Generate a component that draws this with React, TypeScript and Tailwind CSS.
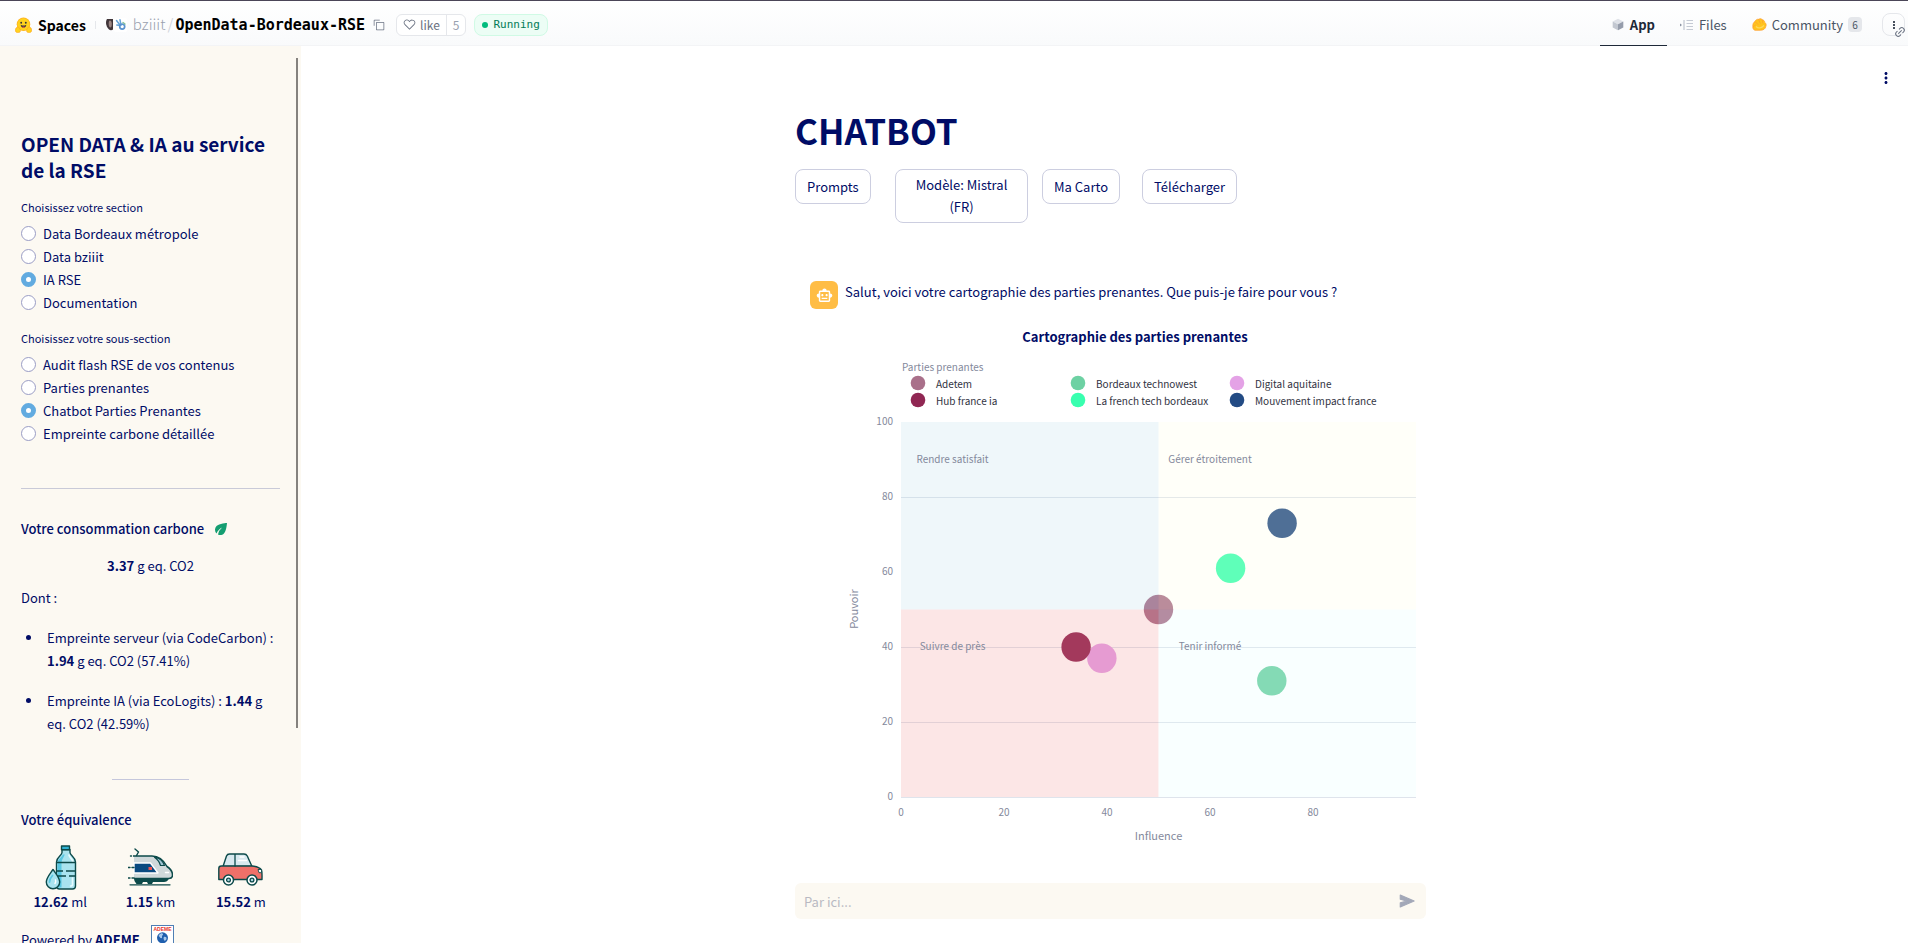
import { useState } from "react";
import { MdEco, MdMoreVert, MdOutlineSmartToy } from "react-icons/md";
import { Link2 } from "lucide-react";

/* ---------- Icons ---------- */

function HuggingFaceLogo() {
  return (
    <svg viewBox="0 0 34 32" className="h-4 w-[17px]" aria-hidden="true">
      <circle cx="17" cy="14.5" r="13.5" fill="#FFB01F" />
      <circle cx="17" cy="14.8" r="12.2" fill="#FFD21E" />
      <circle cx="12.4" cy="11.6" r="1.9" fill="#32343D" />
      <circle cx="21.6" cy="11.6" r="1.9" fill="#32343D" />
      <path d="M11.5 15.6c1.6 1.2 3.4 1.6 5.5 1.6s3.9-.4 5.5-1.6c.3 3-2 6-5.5 6s-5.8-3-5.5-6z" fill="#32343D" />
      <path d="M14 20.2c1.2-1.6 4.8-1.6 6 0-1.5 1.7-4.5 1.7-6 0z" fill="#FF5B52" />
      <path d="M1.5 24c-.4-2 1.3-3 2.6-2.2-.6-2.7 2-3.5 3.2-1.4l2.7 4c1 1.6 1.5 4.2-.6 6-2.6 1.5-7 1-8.2-1.6-.8-1.8-.6-3.5.3-4.8z" fill="#FFD21E" stroke="#FFA51F" strokeWidth="1.3" />
      <path d="M32.5 24c.4-2-1.3-3-2.6-2.2.6-2.7-2-3.5-3.2-1.4l-2.7 4c-1 1.6-1.5 4.2.6 6 2.6 1.5 7 1 8.2-1.6.8-1.8.6-3.5-.3-4.8z" fill="#FFD21E" stroke="#FFA51F" strokeWidth="1.3" />
    </svg>
  );
}

function OwnerAvatar() {
  return (
    <svg viewBox="0 0 22 14" className="h-[14px] w-[22px]" aria-hidden="true">
      <path d="M2 1h6v10.5c-1 1-3 1-4 0C2 9.500 1 7 1 5s.3-3 1-4z" fill="#41363a" />
      <path d="M4.800 2.500c1.200 0 2 1 2 3.500s-.7 3.500-1.500 3.500S3.700 8 3.700 6s.3-3.500 1.100-3.500z" fill="#9b8684" />
      <rect x="9" width="13" height="14" rx="2" fill="#fff" />
      <path d="M11.500 2.500l3.500 4.500M15 1.800l.8 4M11.800 7l4 .5" stroke="#65a3d8" strokeWidth="1.5" strokeLinecap="round" />
      <circle cx="17.2" cy="8.6" r="2.5" fill="none" stroke="#5b93cf" strokeWidth="1.7" />
      <path d="M18 4.500l2 1.500" stroke="#85c19a" strokeWidth="1.4" strokeLinecap="round" />
    </svg>
  );
}

function CopyIcon() {
  return (
    <svg viewBox="0 0 32 32" className="h-3 w-3" fill="currentColor" aria-hidden="true">
      <path d="M28,10V28H10V10H28m0-2H10a2,2,0,0,0-2,2V28a2,2,0,0,0,2,2H28a2,2,0,0,0,2-2V10a2,2,0,0,0-2-2Z" />
      <path d="M4,18H2V4A2,2,0,0,1,4,2H18V4H4Z" />
    </svg>
  );
}

function HeartIcon() {
  return (
    <svg viewBox="0 0 32 32" className="h-[13px] w-[13px]" fill="currentColor" aria-hidden="true">
      <path d="M22.45,6a5.47,5.47,0,0,1,3.91,1.64,5.7,5.7,0,0,1,0,8L16,26.13,5.64,15.64a5.7,5.7,0,0,1,0-8,5.48,5.48,0,0,1,7.82,0L16,10.24l2.53-2.58A5.44,5.44,0,0,1,22.45,6m0-2a7.47,7.47,0,0,0-5.34,2.24L16,7.36,14.89,6.24a7.49,7.49,0,0,0-10.68,0,7.72,7.72,0,0,0,0,10.82L16,29,27.79,17.06a7.72,7.72,0,0,0,0-10.82A7.49,7.49,0,0,0,22.45,4Z" />
    </svg>
  );
}

function CubeIcon() {
  return (
    <svg viewBox="0 0 12 13" className="h-[13px] w-3" aria-hidden="true">
      <path d="M6 .8l5.3 2.7L6 6.200.7 3.500z" fill="#dfe2e8" />
      <path d="M.7 3.500L6 6.200v6L.7 9.500z" fill="#c3c8d1" />
      <path d="M11.300 3.500L6 6.200v6l5.300-2.700z" fill="#969dab" />
    </svg>
  );
}

function FilesIcon() {
  return (
    <svg viewBox="0 0 13 12" className="h-3 w-[13px]" fill="none" stroke="#b4bac6" aria-hidden="true">
      <path d="M0 4.500l2 1.500-2 1.500z" fill="#8b93a3" stroke="none" />
      <path d="M4 1v10" />
      <path d="M6.500 1.500H13M6.500 4.500H13M6.500 7.500H13M6.500 10.500H13" stroke="#c5cad4" />
    </svg>
  );
}

function CommunityIcon() {
  return (
    <svg viewBox="0 0 15 13" className="h-[13px] w-[15px]" aria-hidden="true">
      <path d="M.8 8.500C.7 6 1.500 4.200 3 3.500 3.500 2 5 1 6.500 1.300 8 .2 9.800.6 10.300 1.800c1.500.2 2.300 1.200 2.500 2.600 1.300.8 1.800 2.600 1 4.100-.3 2.400-2.500 3.700-5.300 3.800H3C1.600 12 .7 10.600.8 8.500z" fill="#ffc41f" stroke="#ff9d2e" strokeWidth=".7" />
      <path d="M3.500 3.800L6 6.500M6.600 1.600l1.700 3.600M10.200 2l.6 3M1.500 8.500l2-1.500" stroke="#ff9d2e" strokeWidth=".7" strokeLinecap="round" fill="none" />
      <path d="M4 8.500c2 2 5.500 2 8-1" stroke="#ffd95c" strokeWidth="1.2" fill="none" />
    </svg>
  );
}

function SendIcon() {
  return (
    <svg viewBox="0 0 24 24" className="size-[18px]" fill="currentColor" stroke="currentColor" strokeWidth="1.5" strokeLinejoin="round" aria-hidden="true">
      <path d="M3 4l18.500 8L3 20v-5.500L11.500 12 3 9.500z" />
    </svg>
  );
}

function BottleIcon() {
  return (
    <svg viewBox="0 0 45 45" className="h-[45px] w-[45px]" strokeLinejoin="round" aria-hidden="true">
      <g stroke="#0c4a4a" strokeWidth="1.4">
        <path d="M24 4.500v3c0 3-5.500 4.500-5.500 9.500v24c0 2 1 3 3 3h13c2 0 3-1 3-3V17c0-5-5.500-6.500-5.500-9.500v-3z" fill="#a9e3ef" />
        <path d="M23.500 1h8v3.800h-8z" fill="#2fb1d2" />
      </g>
      <path d="M19.600 18c0-4 4-5 5.200-8.500h2c-1.500 4-3.300 5-3.300 9v24h-3.900z" fill="#58c7e2" />
      <path d="M31 10c.5 2.500 3.500 4 4 7M34.500 33v6.500c0 1-1 1.500-2 1.500" stroke="#e6fbff" strokeWidth="1.6" fill="none" strokeLinecap="round" />
      <path d="M19 17.500h18.500M19 26h6M28 26h9.500M19 31h9M31 31h6.500" stroke="#0c4a4a" strokeWidth="1.4" />
      <path d="M15 24.500c3.500 5 6.700 8.500 6.700 12.500a6.700 6.700 0 0 1-13.400 0c0-4 3.200-7.500 6.700-12.500z" fill="#a9e3ef" stroke="#0c4a4a" strokeWidth="1.4" />
      <path d="M11.500 37c0-2.500 1.700-5 3-6.500" stroke="#5cc9e3" strokeWidth="1.8" fill="none" strokeLinecap="round" />
      <path d="M17.500 35c.5 1.500.3 2.500-.5 3.500" stroke="#fff" strokeWidth="1.4" fill="none" strokeLinecap="round" />
    </svg>
  );
}

function TrainIcon() {
  return (
    <svg viewBox="0 0 45 45" className="h-[45px] w-[45px]" strokeLinejoin="round" aria-hidden="true">
      <path d="M6 11h18c8 0 12 5 15 10.500 3.500 2.300 5.500 5.500 5.500 8.500 0 2.500-1.500 3.500-4 3.500H6z" fill="#cfd8da" />
      <path d="M6 18h16.500L30 28H6z" fill="#0a4a80" stroke="#fff" strokeWidth="1.4" />
      <path d="M28 12.300c4 1.200 7 4.200 8.500 8.200h-4c-1-3.500-3-6-6-8.200z" fill="#9fc4d4" stroke="#0c4a4a" strokeWidth="1.2" />
      <path d="M5 11h19c8 0 12 5 15 10.500 3.500 2.300 5.500 5.500 5.500 8.500 0 2.500-1.500 3.500-4 3.500H6" fill="none" stroke="#0c4a4a" strokeWidth="1.5" />
      <path d="M8.500 10.500l2-3.500L7 4M2.500 11h1M0 22.500h2M4 22.500h2M0 33h2M4 33h2" fill="none" stroke="#0c4a4a" strokeWidth="1.4" strokeLinecap="round" />
      <path d="M37.500 27.500h3" stroke="#fff" strokeWidth="1.5" strokeLinecap="round" />
      <path d="M20.500 22h3.500v3h-3.500z" fill="#ef5350" />
      <path d="M6 33.500h35c-1 2.500-3 3.500-5 3.500H25l-1 2h-4l-1-2h-4l-1 2H8.500L6.500 36z" fill="#0c4a4a" />
      <path d="M2 39.800h40" stroke="#0c4a4a" strokeWidth="1.3" strokeLinecap="round" />
    </svg>
  );
}

function CarIcon() {
  return (
    <svg viewBox="0 0 45 45" className="h-[45px] w-[45px]" strokeLinejoin="round" aria-hidden="true">
      <path d="M5 21.500L8.500 11c.6-1.500 1.500-2 3-2H26c1.500 0 2.500.5 3.300 2L34 21.500z" fill="#d8e9ef" stroke="#0c4a4a" strokeWidth="1.4" />
      <path d="M20.500 15.500h8M22 12h4" stroke="#fff" strokeWidth="1.5" strokeLinecap="round" />
      <path d="M.8 23.500c0-1.500 1-2.500 2.500-2.500H34c5 .5 8 2 9.500 4 .8 2 .5 6.500.5 9.500H.8z" fill="#ef7069" stroke="#0c4a4a" strokeWidth="1.4" />
      <path d="M17 9v12.500" stroke="#0c4a4a" strokeWidth="1.3" />
      <path d="M40 24.500h3.500v3.200H41z" fill="#fff" stroke="#0c4a4a" strokeWidth=".9" />
      <circle cx="10.5" cy="35" r="5" fill="#fff" stroke="#0c4a4a" strokeWidth="1.5" />
      <circle cx="10.5" cy="35" r="1.9" fill="#a9d3dd" stroke="#0c4a4a" strokeWidth="1.3" />
      <circle cx="34" cy="35" r="5" fill="#fff" stroke="#0c4a4a" strokeWidth="1.5" />
      <circle cx="34" cy="35" r="1.9" fill="#a9d3dd" stroke="#0c4a4a" strokeWidth="1.3" />
    </svg>
  );
}

function AdemeLogo() {
  return (
    <svg viewBox="0 0 23 29" className="h-[29px] w-[23px]" role="img" aria-label="ADEME">
      <rect x=".5" y=".5" width="22" height="28" fill="#fff" stroke="#4f7fb5" />
      <text x="11.5" y="5.8" textAnchor="middle" fontSize="5" fontWeight="700" fill="#e5332a" className="font-['Liberation_Sans',sans-serif]">
        ADEME
      </text>
      <circle cx="11.5" cy="12.8" r="5.5" fill="#1f5fae" />
      <path d="M8 10c1.500-2 3.500-2 4-1s-1.500 1.500-1 3-1.500 1.500-2 .5S7 11 8 10zM13 12c1.500-.5 3 .5 2.500 2s-2 2.500-2.500 1-.7-2.500 0-3z" fill="#a8c8ea" />
      <path d="M4 21h15M4 24h15" stroke="#1f5fae" strokeWidth="1.2" />
    </svg>
  );
}

/* ---------- Header ---------- */

function Header() {
  return (
    <header className="flex h-[46px] shrink-0 items-stretch border-t border-b border-t-[#4b4658] border-b-gray-100 bg-gradient-to-b from-white to-gray-50 pr-[3px] pl-[15px]">
      <div className="flex items-center pt-[3px] text-black">
        <a href="#spaces" className="flex items-center gap-[6px] text-sm font-bold">
          <HuggingFaceLogo />
          Spaces
        </a>
        <span className="mx-[9px] h-2 w-px bg-gray-200" />
        <OwnerAvatar />
        <div className="ml-[6px] flex items-baseline text-[15px]">
          <a href="#owner" className="font-light text-gray-400">
            bziiit
          </a>
          <span className="mx-[2px] text-gray-300">/</span>
          <a href="#space" className="font-['DejaVu_Sans_Mono','Liberation_Mono',monospace] font-bold">
            OpenData-Bordeaux-RSE
          </a>
        </div>
        <button type="button" aria-label="Copier le nom" className="ml-2 text-gray-500">
          <CopyIcon />
        </button>
        <div className="ml-[11px] flex h-[22px] items-stretch rounded-md border border-gray-200 bg-white text-xs text-gray-500">
          <button type="button" className="flex items-center gap-1 px-[6px]">
            <HeartIcon />
            like
          </button>
          <button type="button" className="border-l border-gray-200 px-[6px] text-gray-400">
            5
          </button>
        </div>
        <div className="ml-2 flex h-[22px] items-center gap-[5px] rounded-lg border border-emerald-100 bg-emerald-50 px-[7px] text-[11px] text-emerald-700">
          <span className="size-[6px] rounded-full bg-emerald-500" />
          <span className="pt-px font-['DejaVu_Sans_Mono','Liberation_Mono',monospace]">Running</span>
        </div>
      </div>
      <nav className="ml-auto flex items-stretch text-[13px] text-gray-600">
        <a href="#app" className="-mb-px flex items-center gap-[6px] border-b border-gray-800 px-3 pt-[3px] font-bold text-gray-800">
          <CubeIcon />
          App
        </a>
        <a href="#files" className="flex items-center gap-[6px] px-[13px] pt-[3px]">
          <FilesIcon />
          Files
        </a>
        <a href="#community" className="flex items-center gap-[5px] pt-[3px] pr-5 pl-3">
          <CommunityIcon />
          Community
          <span className="flex h-[15px] w-[14px] items-center justify-center rounded bg-gray-200 text-[10px] text-gray-600">6</span>
        </a>
        <div className="relative flex items-center pt-[3px]">
          <button type="button" aria-label="Plus d'options" className="flex size-[23px] items-center justify-center rounded-lg border border-gray-200 text-gray-800">
            <MdMoreVert size={12} />
          </button>
          <Link2 size={12} className="absolute -right-px bottom-[7px] -rotate-45 text-gray-500" />
        </div>
      </nav>
    </header>
  );
}

/* ---------- Sidebar ---------- */

type RadioGroupProps = { name: string; legend: string; options: string[]; initial: string };

function RadioGroup({ name, legend, options, initial }: RadioGroupProps) {
  const [value, setValue] = useState(initial);
  return (
    <fieldset className="mt-[14px]">
      <legend className="mb-[5px] text-[11px] leading-5">{legend}</legend>
      {options.map((option) => (
        <label key={option} className="flex h-[23px] items-center gap-[7px]">
          <input
            type="radio"
            name={name}
            checked={value === option}
            onChange={() => setValue(option)}
            className="size-[15px] appearance-none rounded-full border border-[#9a9dc5] bg-white checked:border-5 checked:border-[#62abe0]"
          />
          {option}
        </label>
      ))}
    </fieldset>
  );
}

const equivalences = [
  { icon: <BottleIcon />, value: "12.62", unit: "ml" },
  { icon: <TrainIcon />, value: "1.15", unit: "km" },
  { icon: <CarIcon />, value: "15.52", unit: "m" },
];

function Sidebar() {
  return (
    <aside className="relative w-[301px] shrink-0 overflow-hidden bg-[#fcf9f2] px-[21px] pt-[85px] leading-[23px]">
      <span className="absolute top-3 right-[3px] h-[670px] w-[2px] bg-[#85827e]" />
      <h2 className="mb-[2px] text-[19px] leading-[26px] font-bold">OPEN DATA &amp; IA au service de la RSE</h2>
      <RadioGroup
        name="section"
        legend="Choisissez votre section"
        options={["Data Bordeaux métropole", "Data bziiit", "IA RSE", "Documentation"]}
        initial="IA RSE"
      />
      <RadioGroup
        name="sous-section"
        legend="Choisissez votre sous-section"
        options={["Audit flash RSE de vos contenus", "Parties prenantes", "Chatbot Parties Prenantes", "Empreinte carbone détaillée"]}
        initial="Chatbot Parties Prenantes"
      />
      <hr className="mt-[43px] border-[#c9cad8]" />
      <h3 className="mt-7 flex items-center gap-2 font-medium">
        Votre consommation carbone
        <MdEco size={18} className="text-[#149e71]" />
      </h3>
      <p className="mt-[14px] text-center">
        <strong>3.37</strong> g eq. CO2
      </p>
      <p className="mt-[9px]">Dont :</p>
      <ul className="mt-[17px] flex list-disc flex-col gap-[17px] pl-[22px]">
        <li className="pl-1">
          Empreinte serveur (via CodeCarbon) : <strong>1.94</strong> g eq. CO2 (57.41%)
        </li>
        <li className="pl-1">
          Empreinte IA (via EcoLogits) : <strong>1.44</strong> g eq. CO2 (42.59%)
        </li>
      </ul>
      <hr className="mx-auto mt-11 w-[77px] border-[#c5c7dc]" />
      <h3 className="mt-7 font-medium">Votre équivalence</h3>
      <div className="mt-[14px] grid grid-cols-3 gap-3">
        {equivalences.map(({ icon, value, unit }) => (
          <div key={unit} className="flex flex-col items-center">
            {icon}
            <p>
              <strong>{value}</strong> {unit}
            </p>
          </div>
        ))}
      </div>
      <div className="mt-3 flex items-center gap-[11px]">
        <p>
          Powered by <strong>ADEME</strong>
        </p>
        <AdemeLogo />
      </div>
    </aside>
  );
}

/* ---------- Chart ---------- */

const plot = { left: 56, top: 102, width: 515, height: 375 };
const px = (v: number) => plot.left + (v / 100) * plot.width;
const py = (v: number) => plot.top + plot.height - (v / 100) * plot.height;

const quadrants = [
  { label: "Rendre satisfait", x: 0, y: 100, labelX: 10, labelY: 90, fill: "lightblue" },
  { label: "Gérer étroitement", x: 50, y: 100, labelX: 60, labelY: 90, fill: "lightyellow" },
  { label: "Suivre de près", x: 0, y: 50, labelX: 10, labelY: 40, fill: "lightcoral" },
  { label: "Tenir informé", x: 50, y: 50, labelX: 60, labelY: 40, fill: "lightcyan" },
];

const stakeholders = [
  { name: "Adetem", x: 50, y: 50, color: "#a9708a" },
  { name: "Bordeaux technowest", x: 72, y: 31, color: "#6dd1a3" },
  { name: "Digital aquitaine", x: 39, y: 37, color: "#e4a2e6" },
  { name: "Hub france ia", x: 34, y: 40, color: "#902753" },
  { name: "La french tech bordeaux", x: 64, y: 61, color: "#38ffaf" },
  { name: "Mouvement impact france", x: 74, y: 73, color: "#234b84" },
];

const legendColumns = [73, 233, 392];

/* Hub france ia is drawn last so that it lies over Digital aquitaine. */
const drawingOrder = [0, 1, 2, 4, 5, 3];

function StakeholderChart() {
  return (
    <svg viewBox="0 0 581 545" className="h-[545px] w-[581px] max-w-full" fontSize="10" fill="#84899c" role="img" aria-label="Cartographie des parties prenantes">
      <text x="290" y="22" textAnchor="middle" fontSize="13" fontWeight="700" fill="#000c66">
        Cartographie des parties prenantes
      </text>
      <text x="57" y="51">Parties prenantes</text>
      {stakeholders.map((s, i) => (
        <g key={s.name} transform={`translate(${legendColumns[i % 3]} ${i < 3 ? 63 : 80})`}>
          <circle r="7.3" fill={s.color} />
          <text x="18" y="5" fill="#31333f">
            {s.name}
          </text>
        </g>
      ))}
      {[0, 20, 40, 60, 80, 100].map((v) => (
        <g key={v}>
          {v !== 100 && v !== 60 && <path d={`M${plot.left} ${py(v) + 0.5}h${plot.width}`} stroke="#dfe4ec" />}
          <text x={plot.left - 8} y={py(v) + 3} textAnchor="end">
            {v}
          </text>
          {v !== 100 && (
            <text x={px(v)} y={plot.top + plot.height + 19} textAnchor="middle">
              {v}
            </text>
          )}
        </g>
      ))}
      {drawingOrder.map((i) => {
        const s = stakeholders[i];
        return <circle key={s.name} cx={px(s.x)} cy={py(s.y)} r="14.7" fill={s.color} />;
      })}
      {quadrants.map((q) => (
        <g key={q.label}>
          <rect x={px(q.x)} y={py(q.y)} width={plot.width / 2} height={plot.height / 2} fill={q.fill} fillOpacity=".2" />
          <text x={px(q.labelX)} y={py(q.labelY) + 3} textAnchor="middle">
            {q.label}
          </text>
        </g>
      ))}
      <text x={px(50)} y="520" textAnchor="middle" fontSize="11">
        Influence
      </text>
      <text transform="translate(13 289) rotate(-90)" textAnchor="middle" fontSize="11">
        Pouvoir
      </text>
    </svg>
  );
}

/* ---------- Main ---------- */

const actionButton = "min-h-[35px] rounded-lg border border-[#cccee0] bg-white px-[11px] py-1 leading-[22px]";

function Main() {
  return (
    <main className="relative flex min-w-0 flex-1 flex-col overflow-hidden bg-white pt-[62px] pb-6 pl-3">
      <button type="button" aria-label="Menu" className="absolute top-[23px] right-[13px]">
        <MdMoreVert size={18} />
      </button>
      <div className="mx-auto flex w-full max-w-[631px] flex-1 flex-col">
        <h1 className="text-[35px] leading-[44px] font-bold">CHATBOT</h1>
        <div className="mt-[17px] grid grid-cols-[86px_133px_86px_1fr] items-start justify-items-start gap-[14px]">
          <button type="button" className={actionButton}>Prompts</button>
          <button type="button" className={actionButton}>Modèle: Mistral (FR)</button>
          <button type="button" className={actionButton}>Ma Carto</button>
          <button type="button" className={actionButton}>Télécharger</button>
        </div>
        <article className="mt-[58px] flex items-start gap-[7px] pl-[15px]">
          <span className="flex size-7 shrink-0 items-center justify-center rounded-md bg-[#ffbd45] text-white">
            <MdOutlineSmartToy size={17} />
          </span>
          <div className="min-w-0 flex-1">
            <p className="leading-[21px]">Salut, voici votre cartographie des parties prenantes. Que puis-je faire pour vous ?</p>
            <div className="mt-[18px]">
              <StakeholderChart />
            </div>
          </div>
        </article>
        <form className="mt-auto flex h-9 items-center rounded-md bg-[#fcf9f2] pr-[10px] pl-[9px]" onSubmit={(e) => e.preventDefault()}>
          <input aria-label="Message" placeholder="Par ici..." className="h-full min-w-0 flex-1 bg-transparent outline-none placeholder:text-[#b9b9c2]" />
          <button type="submit" aria-label="Envoyer" className="text-[#a3a8b8]">
            <SendIcon />
          </button>
        </form>
      </div>
    </main>
  );
}

export default function App() {
  return (
    <div className="flex h-screen flex-col overflow-hidden bg-white font-['Noto_Sans_CJK_JP','Noto_Sans',sans-serif] text-[13px] text-[#000c66]">
      <Header />
      <div className="flex min-h-0 flex-1">
        <Sidebar />
        <Main />
      </div>
    </div>
  );
}
